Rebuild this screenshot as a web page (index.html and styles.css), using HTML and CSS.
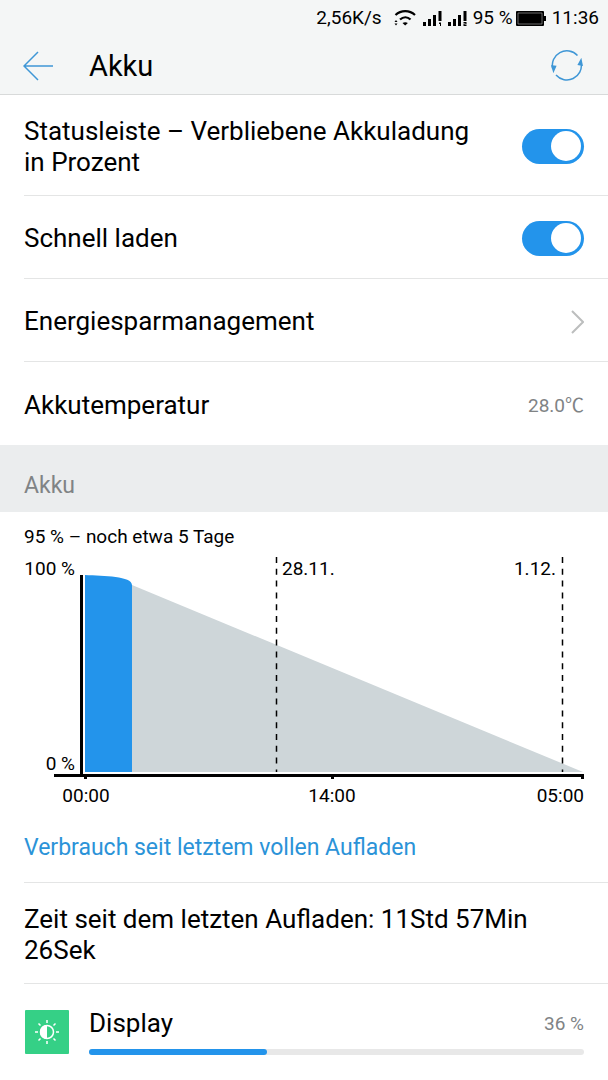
FILE: index.html
```
<!DOCTYPE html>
<html lang="de">
<head>
    <meta charset="UTF-8">
    <meta name="viewport" content="width=device-width, initial-scale=1">
    <title>Akku</title>
    <link rel="stylesheet" href="styles.css">
</head>

<body>
<header class="header">
    <div class="status-bar">
        <span class="speed">2,56K/s</span>
        <svg class="wifi" width="22" height="18" viewBox="0 0 22 18">
            <path d="M1.500 6C7 .8 15.500 .8 21 6M6 10.500c3.300-3 7.500-3 10.500 0" fill="none" stroke="#000" stroke-width="2.200"/>
            <path d="M8.500 14q2.700-1.600 5.400 0L11.200 16.500z"/>
            <path d="M.5 13l1.500-2 1.500 2zM.5 14.500l1.500 2 1.500-2z"/>
        </svg>
        <svg class="signal" width="19" height="17" viewBox="0 0 19 17">
            <path d="M0 12h3v4H0zM5 9h3v7H5zM10 5h3v11h-3zM15.500 1h3v10h-3zM16 12.500h2V16h-1v-2h-1z"/>
        </svg>
        <svg class="signal" width="19" height="17" viewBox="0 0 19 17">
            <path d="M0 12h3v4H0zM5 9h3v7H5zM10 5h3v11h-3zM15.500 1h3v10h-3zM15.500 12h3v2.500h-2v.5h2v1h-3v-2.500h2V13h-2z"/>
        </svg>
        <span>95 %</span>
        <svg class="battery" width="30" height="15" viewBox="0 0 30 15">
            <rect width="28" height="15" rx="1"/>
            <path d="M28 5h2v5h-2z"/>
            <path d="M2 2h24v11H2z" fill="none" stroke="#999" stroke-width=".7"/>
        </svg>
        <span>11:36</span>
    </div>
    <div class="title-bar">
        <button class="icon-btn" type="button" aria-label="Zurück">
            <svg width="30" height="30" viewBox="0 0 30 30">
                <path d="M30 15H1M15 1L1 15l14 14"/>
            </svg>
        </button>
        <h1>Akku</h1>
        <button class="icon-btn" type="button" aria-label="Aktualisieren">
            <svg width="32" height="32" viewBox="0 0 32 32">
                <path d="M26.500 5.500A14.500 14.500 0 0 0 1.800 19M5 25a14.500 14.500 0 0 0 25.200-12"/>
                <path class="tip" d="M1 16l3.500.3L2.500 21zM27.500 14.500L30 10l1 5z"/>
            </svg>
        </button>
    </div>
</header>

<main>
    <div class="row tall">
        <label for="percent">Statusleiste – Verbliebene Akkuladung in Prozent</label>
        <input class="switch" type="checkbox" id="percent" checked>
    </div>
    <div class="row">
        <label for="fast">Schnell laden</label>
        <input class="switch" type="checkbox" id="fast" checked>
    </div>
    <a class="row" href="#">
        <span>Energiesparmanagement</span>
        <svg class="chevron" width="14" height="24" viewBox="0 0 14 24">
            <path d="M2 1l11 11L2 23"/>
        </svg>
    </a>
    <div class="row last">
        <span>Akkutemperatur</span>
        <span class="value">28.0℃</span>
    </div>

    <h2 class="section">Akku</h2>

    <div class="usage">
        <p class="remaining">95 % – noch etwa 5 Tage</p>
        <svg class="chart" viewBox="0 0 560 256">
            <path d="M108 33L559 220H108z" fill="#ced6d9"/>
            <path d="M61 23C80 24 108 24 108 33V220H61z" fill="#2394eb"/>
            <!-- axes -->
            <path d="M56 23h3v199h501v5h-3v-2H310v2h-3v-2H63v2h-3v-2H30v-3h26z"/>
            <!-- day marks -->
            <path class="day" d="M252.500 5v215M538.500 5v215"/>
            <text x="51" y="23" text-anchor="end">100 %</text>
            <text x="51" y="218" text-anchor="end">0 %</text>
            <text x="258" y="23">28.11.</text>
            <text x="532" y="23" text-anchor="end">1.12.</text>
            <text x="62" y="250" text-anchor="middle">00:00</text>
            <text x="308" y="250" text-anchor="middle">14:00</text>
            <text x="560" y="250" text-anchor="end">05:00</text>
        </svg>
        <a class="detail" href="#">Verbrauch seit letztem vollen Aufladen</a>
    </div>
    <div class="row tall">
        <span>Zeit seit dem letzten Aufladen: 11Std 57Min 26Sek</span>
    </div>

    <div class="app">
        <svg class="app-icon" width="44" height="44" viewBox="0 0 44 44">
            <rect width="44" height="44" rx="1" fill="#35d086"/>
            <circle cx="22" cy="22" r="6.500" fill="none" stroke="#fff" stroke-width="1.500"/>
            <path d="M22 15a7 7 0 0 0 0 14z" fill="#fff"/>
            <path d="M22 10v3M22 31v3M10 22h3M31 22h3M13.500 13.500l2 2M28.500 28.500l2 2M13.500 30.500l2-2M28.500 15.500l2-2" stroke="#fff" stroke-width="1.500"/>
        </svg>
        <div class="app-info">
            <div class="app-head">
                <span>Display</span>
                <span class="value">36 %</span>
            </div>
            <div class="bar">
                <div class="bar-fill" style="width: 36%"></div>
            </div>
        </div>
    </div>
</main>
</body>

</html>
```
FILE: styles.css
```
* {
    box-sizing: border-box;
}

body {
    margin: 0;
    background: #fff;
    color: #000;
    font-family: Roboto, "Noto Sans CJK SC", sans-serif;
    font-size: 26px;
    line-height: 31px;
}

h1, h2, p {
    margin: 0;
    font-weight: normal;
}

a {
    color: inherit;
    text-decoration: none;
}

.header {
    background: #f4f6f6;
    border-bottom: 1px solid #d8dada;
}

.status-bar {
    display: flex;
    justify-content: flex-end;
    align-items: center;
    height: 36px;
    padding-right: 9px;
    font-size: 19px;
    line-height: 36px;
}

.speed {
    margin-right: 12px;
}

.wifi {
    margin-right: 7px;
}

.signal {
    margin-right: 6px;
}

.battery {
    margin: 0 6px 0 3px;
}

.title-bar {
    display: flex;
    align-items: center;
    height: 58px;
    padding: 2px 25px 0 23px;
}

.title-bar h1 {
    flex: 1;
    margin-left: 36px;
    font-size: 29px;
    line-height: 36px;
}

.icon-btn {
    padding: 0;
    border: 0;
    background: none;
    cursor: pointer;
}

.icon-btn svg {
    display: block;
    fill: none;
    stroke: #3f97d6;
    stroke-width: 1.5;
}

.icon-btn .tip {
    fill: #3f97d6;
}

.row {
    display: flex;
    align-items: center;
    justify-content: space-between;
    gap: 40px;
    min-height: 83px;
    margin-left: 24px;
    padding: 3px 24px 0 0;
    border-bottom: 1px solid #e4e5e5;
}

.row.tall {
    min-height: 101px;
}

.row.last {
    border-bottom: 0;
}

.switch {
    appearance: none;
    flex: none;
    width: 62px;
    height: 35px;
    margin: 0;
    padding: 2px 3px;
    border-radius: 18px;
    background: #c8cccd;
    cursor: pointer;
}

.switch:before {
    content: "";
    display: block;
    width: 30px;
    height: 30px;
    border-radius: 50%;
    background: #fff;
}

.switch:checked {
    background: #2394eb;
}

.switch:checked:before {
    margin-left: auto;
}

.chevron path {
    fill: none;
    stroke: #bcbebe;
    stroke-width: 2;
}

.value {
    color: #808385;
    font-size: 19px;
}

.section {
    padding: 25px 24px 11px;
    background: #ebedee;
    color: #808385;
    font-size: 23px;
    line-height: 31px;
}

.usage {
    margin-left: 24px;
    padding: 10px 24px 0 0;
    border-bottom: 1px solid #e4e5e5;
}

.remaining {
    font-size: 19px;
    line-height: 30px;
}

.chart {
    display: block;
    width: 100%;
    font-size: 19px;
}

.chart .day {
    stroke: #000;
    stroke-width: 1.5;
    stroke-dasharray: 6 5.8;
}

.detail {
    display: block;
    padding: 24px 0 19px;
    color: #2b93d8;
    font-size: 23px;
}

.app {
    display: flex;
    align-items: center;
    gap: 20px;
    padding: 24px 24px 24px 25px;
}

.app-info {
    flex: 1;
}

.app-head {
    display: flex;
    align-items: center;
    justify-content: space-between;
}

.bar {
    height: 6px;
    margin-top: 10px;
    border-radius: 3px;
    background: #e8e8e8;
}

.bar-fill {
    height: 6px;
    border-radius: 3px;
    background: #2394eb;
}
```
